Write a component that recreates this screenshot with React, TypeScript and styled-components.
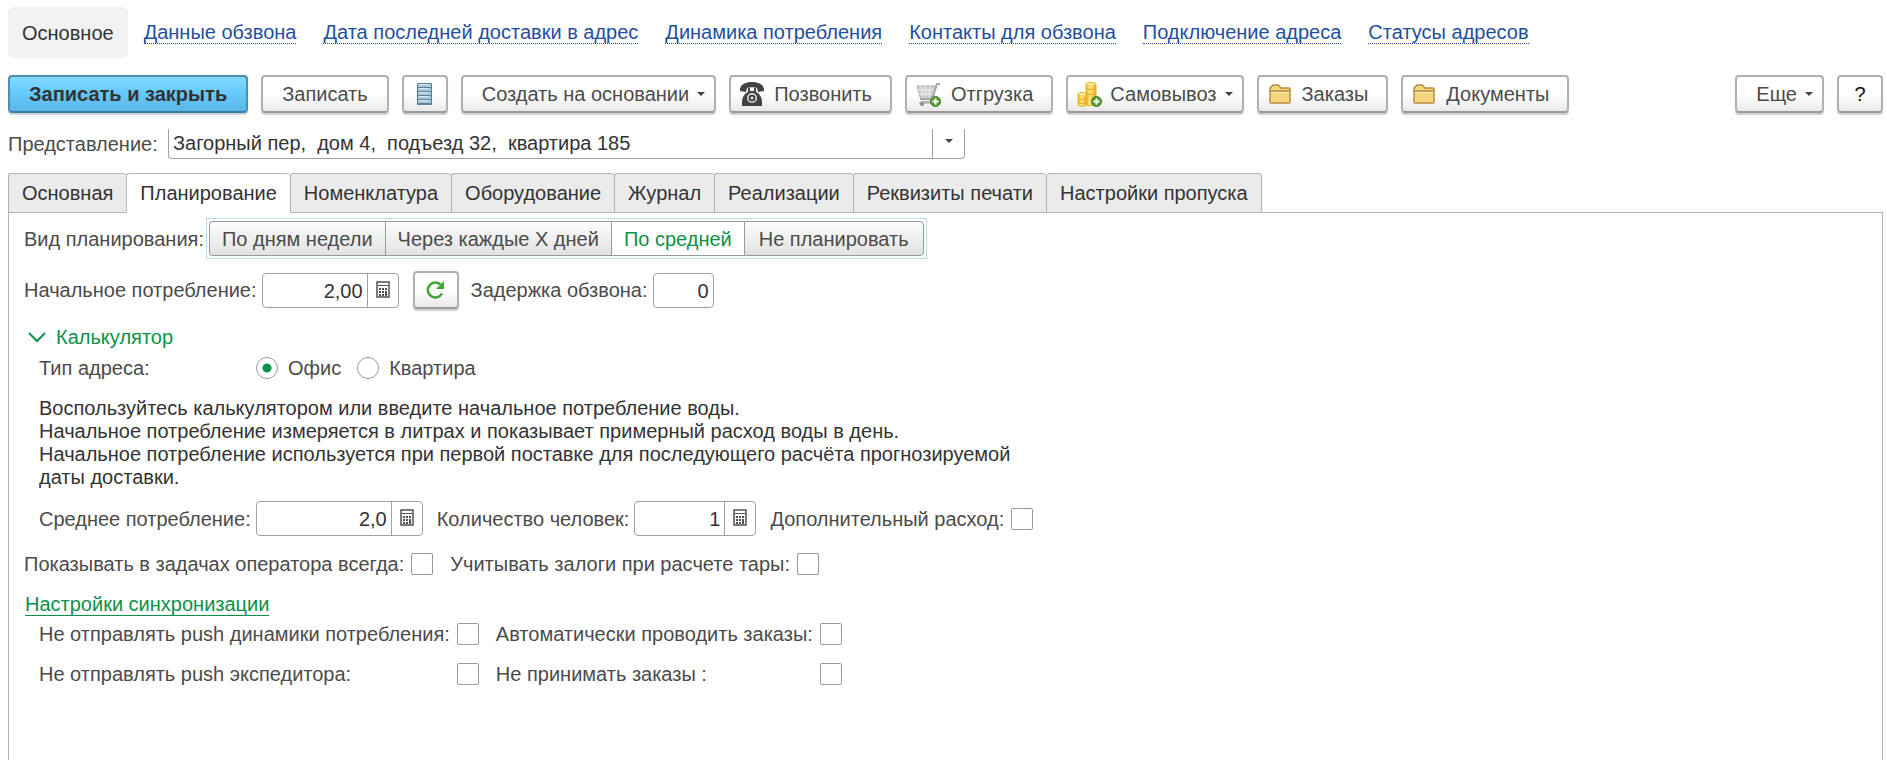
import { useState } from 'react';
import type { ReactNode } from 'react';
import styled, { createGlobalStyle, css } from 'styled-components';

const GlobalStyle = createGlobalStyle`
  *, *::before, *::after { box-sizing: border-box; }
  body {
    margin: 0;
    background: #fff;
    color: #4b4b4b;
    font-family: "Liberation Sans", Arial, sans-serif;
    font-size: 20px;
    line-height: 24px;
  }
  button, input { font: inherit; color: inherit; margin: 0; }
`;

const Page = styled.div`
  display: flex;
  flex-direction: column;
  min-height: 100vh;
  padding: 7px 4px 6px 8px;
  white-space: nowrap;
`;

const Nav = styled.nav`
  display: flex;
  align-items: center;
  gap: 16px;
`;

const NavLinks = styled.div`
  display: flex;
  gap: 27px;
`;

const NavCurrent = styled.span`
  padding: 14px 14px 13px;
  border-radius: 5px;
  background: #f2f2f2;
  color: #333;
`;

const NavLink = styled.a`
  line-height: 22px;
  color: #1f4f9e;
  text-decoration: none;
  border-bottom: 1px dotted #1f4f9e;
`;

const Toolbar = styled.div`
  display: flex;
  gap: 13px;
  margin-top: 17px;
`;

const Spacer = styled.div`
  flex: 1;
`;

type ButtonProps = { $kind?: 'primary' | 'icon' | 'plain' | 'picture' };

const Button = styled.button<ButtonProps>`
  display: inline-flex;
  align-items: center;
  justify-content: center;
  height: 38px;
  padding: 0 19px;
  border: 2px solid #b0b0b0;
  border-bottom-color: #989898;
  border-radius: 4px;
  background: linear-gradient(#fff 50%, #e9e9e9);
  box-shadow: 0 2px 1px #d0d0d0;
  white-space: nowrap;
  ${({ $kind }) => $kind === 'picture' && css`padding: 0 18px 0 9px; gap: 10px;`}
  ${({ $kind }) => $kind === 'icon' && css`width: 46px; padding: 0; color: #111;`}
  ${({ $kind }) =>
    $kind === 'primary' &&
    css`
      border-color: #4a8fb0;
      border-bottom-color: #3c7c9c;
      background: linear-gradient(#85d8ff, #66cbfd 45%, #5bb6e6);
      color: #333;
      font-weight: bold;
    `}
`;

const Caret = styled.span`
  flex: none;
  border: 4px solid transparent;
  border-top-color: #444;
  border-bottom: 0;
`;

const MenuButton = styled(Button)`
  padding-right: 9px;
  gap: 8px;
`;

const Presentation = styled.div`
  display: flex;
  align-items: center;
  margin-top: 16px;
`;

const Label = styled.label<{ $width?: number }>`
  width: ${({ $width }) => ($width ? `${$width}px` : 'auto')};
  flex: none;
`;

const ComboBox = styled.div`
  display: flex;
  width: 797px;
  height: 30px;
  border: 1px solid #a0a0a0;
  border-top: 0;
  border-radius: 0 0 4px 4px;
`;

const ComboInput = styled.input`
  flex: 1;
  min-width: 0;
  padding: 0 4px 2px;
  border: 0;
  outline: 0;
  background: none;
  color: #333;
`;

const ComboButton = styled.button`
  display: flex;
  align-items: center;
  justify-content: center;
  width: 32px;
  padding: 0 0 6px;
  border: 0;
  border-left: 1px solid #a0a0a0;
  background: none;
`;

const Tabs = styled.div`
  display: flex;
  margin-top: 14px;
`;

const Tab = styled.button<{ $active: boolean }>`
  height: 40px;
  padding: 0 13px 1px;
  margin-bottom: -1px;
  border: 1px solid #b3b3b3;
  border-right-width: 0;
  border-radius: 3px 3px 0 0;
  background: #ebebeb;
  color: #333;
  z-index: 1;
  ${({ $active }) => $active && css`background: #fff; border-bottom-color: #fff;`}
  &:last-child { border-right-width: 1px; }
`;

const Panel = styled.section`
  flex: 1;
  padding: 5px 15px 40px;
  border: 1px solid #b3b3b3;
  border-bottom: 0;
`;

const Row = styled.div<{ $top?: number; $indent?: boolean }>`
  display: flex;
  align-items: center;
  margin-top: ${({ $top = 0 }) => $top}px;
  padding-left: ${({ $indent }) => ($indent ? 15 : 0)}px;
`;

const Segments = styled.div`
  display: flex;
  padding: 2px;
  margin-left: 2px;
  border: 1px solid #b5dcf0;
`;

const Segment = styled.button<{ $active: boolean }>`
  height: 35px;
  padding: 0 12px;
  border: 1px solid #999;
  border-right-width: 0;
  background: linear-gradient(#fdfdfd, #e2e2e2);
  ${({ $active }) => $active && css`background: #fff; color: #0d9148;`}
  &:first-child { border-radius: 4px 0 0 4px; }
  &:last-child { border-right-width: 1px; border-radius: 0 4px 4px 0; padding: 0 14px; }
`;

const NumberBox = styled.div<{ $width: number }>`
  display: flex;
  width: ${({ $width }) => $width}px;
  height: 35px;
  margin: 0 14px 0 5px;
  border: 1px solid #a0a0a0;
  border-radius: 4px;
`;

const NumberInput = styled.input`
  flex: 1;
  min-width: 0;
  padding: 1px 4px 0;
  border: 0;
  outline: 0;
  background: none;
  color: #333;
  text-align: right;
`;

const CalcButton = styled.button`
  display: flex;
  align-items: center;
  justify-content: center;
  width: 31px;
  padding: 0 0 2px;
  border: 0;
  border-left: 1px solid #a0a0a0;
  background: none;
`;

const RefreshButton = styled(Button)`
  margin-right: 12px;
`;

const GroupToggle = styled.button`
  display: flex;
  align-items: center;
  gap: 10px;
  margin-top: 16px;
  padding: 0 4px;
  border: 0;
  background: none;
  color: #0d9148;
`;

const Choice = styled.label`
  display: flex;
  align-items: center;
  gap: 10px;
  margin-right: 16px;
`;

const Radio = styled.input.attrs({ type: 'radio' })`
  appearance: none;
  width: 22px;
  height: 22px;
  border: 1px solid #999;
  border-radius: 50%;
  background: #fff;
  &:checked { background: radial-gradient(circle, #0d9148 4px, #fff 5px); }
`;

const Checkbox = styled.input.attrs({ type: 'checkbox' })`
  appearance: none;
  flex: none;
  width: 22px;
  height: 22px;
  margin: 0 17px 0 7px;
  border: 1px solid #999;
  border-radius: 2px;
  background: #fff;
  &:checked { box-shadow: inset 0 0 0 5px #fff; background: #0d9148; }
`;

const Hint = styled.p`
  margin: 17px 0 0;
  padding-left: 15px;
  line-height: 23px;
  color: #333;
`;

const SyncLink = styled.a`
  display: inline-block;
  margin: 17px 0 0 1px;
  line-height: 22px;
  color: #0d9148;
  text-decoration: none;
  border-bottom: 1px solid #0d9148;
`;

const SyncGrid = styled.div`
  display: grid;
  grid-template-columns: repeat(4, max-content);
  row-gap: 16px;
  margin-top: 6px;
  padding-left: 15px;
  align-items: center;
`;

const ListIcon = () => (
  <svg width="15" height="22" viewBox="0 0 15 22">
    <rect x="0" y="0" width="15" height="22" rx="1" fill="#5c7f9c" />
    {[1, 5, 9, 13, 17].map((y) => (
      <g key={y}>
        <rect x="1" y={y} width="13" height="3" fill="#a9c8de" />
        <rect x="2" y={y} width="9" height="1" fill="#dcebf5" />
      </g>
    ))}
  </svg>
);

const PhoneIcon = () => (
  <svg width="24" height="24" viewBox="0 0 24 24">
    <path d="M0 7C1 2 6 0 12 0s11 2 12 7v2l-6 1-1-4c-3-1-7-1-10 0l-1 4-6-1z" fill="#444" />
    <path d="M8 6h2v3h4V6h2v4c4 2 6 6 6 10v4H2v-4c0-4 2-8 6-10z" fill="#444" />
    <circle cx="12" cy="16" r="5" fill="#e4e4e4" />
    <circle cx="12" cy="16" r="3.5" fill="#444" />
    <circle cx="12" cy="16" r="1.5" fill="#ddd" />
  </svg>
);

const PlusBadge = () => (
  <g>
    <circle cx="19.5" cy="19.5" r="5" fill="#5a9e33" stroke="#3d7a22" />
    <path d="M19.5 16.5v6M16.5 19.5h6" stroke="#fff" strokeWidth="2" />
  </g>
);

const CartIcon = () => (
  <svg width="25" height="25" viewBox="0 0 25 25">
    <path d="M1 4h19l-4 11H4z" fill="#cfcfcf" stroke="#aaa" />
    <path d="M5 4l2 11M9 4l1 11M14 4l-1 11M2 8h16M3 12h14" stroke="#f1f1f1" fill="none" />
    <path d="M24 2h-3l-5 15H4M16 17l2 3H5" stroke="#a5a5a5" strokeWidth="2" fill="none" />
    <path d="M3 20h13v2H3z" fill="#c4c4c4" />
    <circle cx="6" cy="22" r="2" fill="#8a8a8a" />
    <PlusBadge />
  </svg>
);

const CoinsIcon = () => (
  <svg width="25" height="25" viewBox="0 0 25 25">
    <defs>
      <linearGradient id="gold" x1="0" x2="1" y1="0" y2="0">
        <stop offset="0" stopColor="#f3bd2b" />
        <stop offset="0.4" stopColor="#ffe680" />
        <stop offset="1" stopColor="#eeb11f" />
      </linearGradient>
    </defs>
    <path d="M9 2c0-2 10-2 10 0v20c0 2-10 2-10 0z" fill="url(#gold)" stroke="#e6b02c" />
    <path d="M1 12c0-2 9-2 9 0v10c0 3-9 3-9 0z" fill="url(#gold)" stroke="#e6b02c" />
    <path d="M9 6c2 2 8 2 10 0M10 11c2 2 7 2 9 0M1 16c2 2 7 2 9 0M1 20c2 2 7 2 9 0" stroke="#e2a91f" fill="none" />
    <ellipse cx="14" cy="2" rx="4" ry="1" fill="#fff0a0" />
    <ellipse cx="5.5" cy="12" rx="3.5" ry="1" fill="#fff0a0" />
    <PlusBadge />
  </svg>
);

const FolderIcon = () => (
  <svg width="24" height="20" viewBox="0 0 24 20">
    <path d="M2 18V4l3-3h5l3 3h8q1 0 1 1v13q0 1-1 1H3q-1 0-1-1z" fill="#f6d67b" stroke="#b98a45" strokeWidth="1.5" />
    <path d="M2 7h20" stroke="#b98a45" strokeWidth="1.5" />
    <path d="M3 8.5h18" stroke="#fdeeb5" />
  </svg>
);

const CalcIcon = () => (
  <svg width="14" height="17" viewBox="0 0 14 17">
    <rect x="1" y="1" width="12" height="15" fill="#fff" stroke="#505050" strokeWidth="1.5" />
    <path d="M2 4.5h10" stroke="#505050" />
    <path d="M3 7h2v2H3zM6 7h2v2H6zM9 7h2v2H9zM3 10h2v2H3zM6 10h2v2H6zM9 10h2v5H9zM3 13h2v2H3zM6 13h2v2H6z" fill="#505050" />
  </svg>
);

const RefreshIcon = () => (
  <svg width="19" height="20" viewBox="0 0 19 20">
    <path d="M16 13.5A7.5 7.5 0 1 1 14.5 4.5" fill="none" stroke="#3fa535" strokeWidth="2.5" />
    <path d="M18 1v8h-8z" fill="#3fa535" />
  </svg>
);

const ChevronIcon = () => (
  <svg width="18" height="11" viewBox="0 0 18 11">
    <path d="M1 1l8 8 8-8" fill="none" stroke="#0d9148" strokeWidth="2" />
  </svg>
);

const links = [
  'Данные обзвона',
  'Дата последней доставки в адрес',
  'Динамика потребления',
  'Контакты для обзвона',
  'Подключение адреса',
  'Статусы адресов',
];

const tabs = [
  'Основная',
  'Планирование',
  'Номенклатура',
  'Оборудование',
  'Журнал',
  'Реализации',
  'Реквизиты печати',
  'Настройки пропуска',
];

const modes = ['По дням недели', 'Через каждые Х дней', 'По средней', 'Не планировать'];

function PictureButton({ icon, children }: { icon: ReactNode; children: ReactNode }) {
  return (
    <Button $kind="picture">
      {icon}
      {children}
    </Button>
  );
}

function NumberField({ id, value, width, calc }: { id: string; value: string; width: number; calc?: boolean }) {
  return (
    <NumberBox $width={width}>
      <NumberInput id={id} defaultValue={value} />
      {calc && (
        <CalcButton aria-label="Открыть калькулятор">
          <CalcIcon />
        </CalcButton>
      )}
    </NumberBox>
  );
}

export default function App() {
  const [tab, setTab] = useState(1);
  const [mode, setMode] = useState(2);

  return (
    <>
      <GlobalStyle />
      <Page>
        <Nav>
          <NavCurrent>Основное</NavCurrent>
          <NavLinks>
            {links.map((text) => (
              <NavLink href="#" key={text}>{text}</NavLink>
            ))}
          </NavLinks>
        </Nav>

        <Toolbar>
          <Button $kind="primary">Записать и закрыть</Button>
          <Button>Записать</Button>
          <Button $kind="icon" aria-label="Список"><ListIcon /></Button>
          <MenuButton>Создать на основании<Caret /></MenuButton>
          <PictureButton icon={<PhoneIcon />}>Позвонить</PictureButton>
          <PictureButton icon={<CartIcon />}>Отгрузка</PictureButton>
          <MenuButton $kind="picture"><CoinsIcon />Самовывоз<Caret /></MenuButton>
          <PictureButton icon={<FolderIcon />}>Заказы</PictureButton>
          <PictureButton icon={<FolderIcon />}>Документы</PictureButton>
          <Spacer />
          <MenuButton>Еще<Caret /></MenuButton>
          <Button $kind="icon">?</Button>
        </Toolbar>

        <Presentation>
          <Label htmlFor="presentation" $width={160}>Представление:</Label>
          <ComboBox>
            <ComboInput id="presentation" defaultValue="Загорный пер,  дом 4,  подъезд 32,  квартира 185" />
            <ComboButton aria-label="Выбрать"><Caret /></ComboButton>
          </ComboBox>
        </Presentation>

        <Tabs role="tablist">
          {tabs.map((text, i) => (
            <Tab key={text} role="tab" aria-selected={i === tab} $active={i === tab} onClick={() => setTab(i)}>
              {text}
            </Tab>
          ))}
        </Tabs>

        <Panel>
          <Row>
            <span>Вид планирования:</span>
            <Segments role="group" aria-label="Вид планирования">
              {modes.map((text, i) => (
                <Segment key={text} $active={i === mode} aria-pressed={i === mode} onClick={() => setMode(i)}>
                  {text}
                </Segment>
              ))}
            </Segments>
          </Row>

          <Row $top={12}>
            <Label htmlFor="initial">Начальное потребление:</Label>
            <NumberField id="initial" value="2,00" width={137} calc />
            <RefreshButton $kind="icon" aria-label="Обновить"><RefreshIcon /></RefreshButton>
            <Label htmlFor="delay">Задержка обзвона:</Label>
            <NumberField id="delay" value="0" width={61} />
          </Row>

          <GroupToggle aria-expanded="true"><ChevronIcon />Калькулятор</GroupToggle>

          <Row $top={7} $indent role="radiogroup" aria-label="Тип адреса">
            <Label as="span" $width={217}>Тип адреса:</Label>
            <Choice><Radio name="kind" defaultChecked />Офис</Choice>
            <Choice><Radio name="kind" />Квартира</Choice>
          </Row>

          <Hint>
            Воспользуйтесь калькулятором или введите начальное потребление воды.<br />
            Начальное потребление измеряется в литрах и показывает примерный расход воды в день.<br />
            Начальное потребление используется при первой поставке для последующего расчёта прогнозируемой<br />
            даты доставки.
          </Hint>

          <Row $top={12} $indent>
            <Label htmlFor="average">Среднее потребление:</Label>
            <NumberField id="average" value="2,0" width={167} calc />
            <Label htmlFor="people">Количество человек:</Label>
            <NumberField id="people" value="1" width={122} calc />
            <Label htmlFor="extra">Дополнительный расход:</Label>
            <Checkbox id="extra" />
          </Row>

          <Row $top={16}>
            <Label htmlFor="always">Показывать в задачах оператора всегда:</Label>
            <Checkbox id="always" />
            <Label htmlFor="deposit">Учитывать залоги при расчете тары:</Label>
            <Checkbox id="deposit" />
          </Row>

          <SyncLink href="#">Настройки синхронизации</SyncLink>

          <SyncGrid>
            <Label htmlFor="nopush">Не отправлять push динамики потребления:</Label>
            <Checkbox id="nopush" />
            <Label htmlFor="auto">Автоматически проводить заказы:</Label>
            <Checkbox id="auto" />
            <Label htmlFor="noexp">Не отправлять push экспедитора:</Label>
            <Checkbox id="noexp" />
            <Label htmlFor="noorders">Не принимать заказы :</Label>
            <Checkbox id="noorders" />
          </SyncGrid>
        </Panel>
      </Page>
    </>
  );
}
